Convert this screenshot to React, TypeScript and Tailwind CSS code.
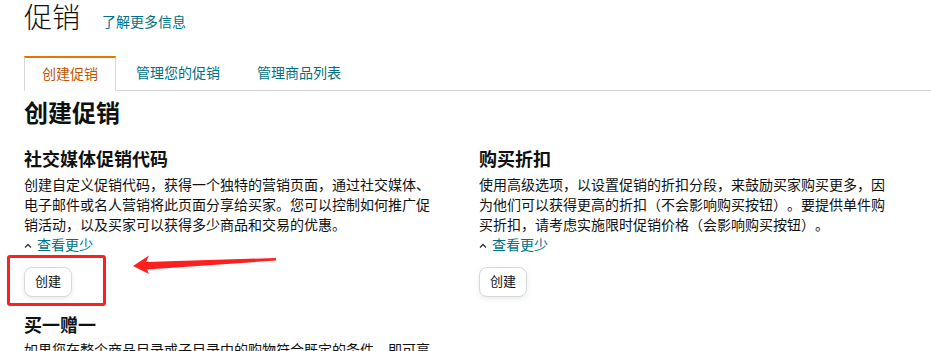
import React from "react";

function Caret() {
  return (
    <svg width="8" height="6" viewBox="0 0 8 6" className="mr-[5px] mt-[1px]">
      <path d="M1 4.5 L4 1.5 L7 4.5" fill="none" stroke="#333" strokeWidth="1.3" />
    </svg>
  );
}

function Card({ title, text }: { title: string; text: string }) {
  return (
    <div>
      <h3 className="text-[18px] leading-[24px] font-bold text-[#0f1111]">{title}</h3>
      <p className="mt-[3px] text-[14px] leading-[20px] text-[#0f1111] max-w-[415px]">{text}</p>
      <div className="flex items-center text-[14px] leading-[20px]">
        <Caret />
        <span className="text-[#007185]">查看更少</span>
      </div>
      <button className="mt-[12px] h-[30px] w-[48px] rounded-[8px] border border-[#d5d9d9] bg-white text-[13px] text-[#0f1111] shadow-[0_2px_5px_rgba(213,217,217,0.5)] flex items-center justify-center">
        创建
      </button>
    </div>
  );
}

export default function App() {
  return (
    <div className="relative w-[931px] h-[351px] overflow-hidden bg-white font-['Liberation_Sans','Noto_Sans_CJK_SC',sans-serif] text-[#0f1111] [text-spacing-trim:space-all]">
      <div className="pl-6">
        <div className="flex items-center h-[38px]">
          <h1 className="text-[28px] leading-[38px] font-light text-[#0f1111]">促销</h1>
          <a className="ml-[22px] pt-[6px] text-[14px] text-[#007185]">了解更多信息</a>
        </div>
        <div className="mt-[18px] flex border-b border-[#d5d9d9] h-[35px]">
          <div className="-mb-px h-[35px] border-t-2 border-t-[#e77600] border-x border-x-[#d5d9d9] bg-white px-[17px] flex items-center text-[14px] text-[#c45500]">
            创建促销
          </div>
          <div className="px-[20px] flex items-center text-[14px] text-[#007185]">管理您的促销</div>
          <div className="px-[17px] flex items-center text-[14px] text-[#007185]">管理商品列表</div>
        </div>
        <h2 className="mt-[7px] text-[24px] leading-[32px] font-bold">创建促销</h2>
        <div className="mt-[18px] grid grid-cols-[455px_1fr]">
          <div>
            <Card
              title="社交媒体促销代码"
              text="创建自定义促销代码，获得一个独特的营销页面，通过社交媒体、电子邮件或名人营销将此页面分享给买家。您可以控制如何推广促销活动，以及买家可以获得多少商品和交易的优惠。"
            />
            <h3 className="mt-[17px] text-[18px] leading-[24px] font-bold">买一赠一</h3>
            <p className="mt-[2px] text-[14px] leading-[20px] max-w-[415px]">
              如果您在整个商品目录或子目录中的购物符合既定的条件，即可享受买一赠一的优惠。
            </p>
          </div>
          <div>
            <Card
              title="购买折扣"
              text="使用高级选项，以设置促销的折扣分段，来鼓励买家购买更多，因为他们可以获得更高的折扣（不会影响购买按钮）。要提供单件购买折扣，请考虑实施限时促销价格（会影响购买按钮）。"
            />
          </div>
        </div>
      </div>

      <div className="absolute left-[7px] top-[255px] w-[99px] h-[51px] border-[3px] border-[#ff1f1f] rounded-[3px]" />
      <svg className="absolute left-0 top-0" width="931" height="351" viewBox="0 0 931 351">
        <polygon
          points="133,266 149,255.5 146,262 276,258 276,260.5 147,269.5 149,274"
          fill="#ff1f1f"
        />
      </svg>
    </div>
  );
}
